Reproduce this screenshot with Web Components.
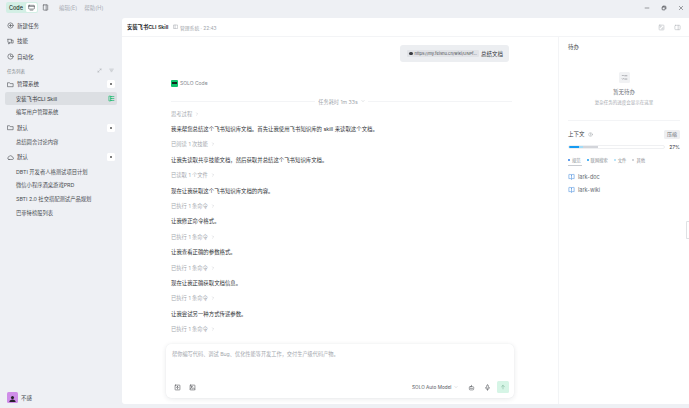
<!DOCTYPE html>
<html lang="zh"><head><meta charset="utf-8"><title>SOLO Code</title>
<style>
html,body{margin:0;padding:0;height:100%;overflow:hidden;background:#eef0f4}
body{font-family:Inter,"Noto Sans CJK SC",sans-serif;font-size:5.5px;color:#33363b}
</style></head><body>
<x-app>
  <x-topbar slot="top"></x-topbar>
  <x-sidebar slot="side">
    <x-nav icon="plus">新建任务</x-nav>
    <x-nav icon="skill">技能</x-nav>
    <x-nav icon="clock">自动化</x-nav>
    <x-listhead>任务列表</x-listhead>
    <x-group icon="folder" add>管理系统</x-group>
    <x-task selected>安装飞书CLI Skill</x-task>
    <x-task>编写用户管理系统</x-task>
    <x-group icon="folder" add>默认</x-group>
    <x-task>总结圆舍讨论内容</x-task>
    <x-group icon="cloud" add>默认</x-group>
    <x-task>DBTI 开发者人格测试项目计划</x-task>
    <x-task>微信小程序酒桌游戏PRD</x-task>
    <x-task>SBTI 2.0 社交搭配测试产品规划</x-task>
    <x-task>巴菲特榜股列表</x-task>
    <x-user slot="foot">不感</x-user>
  </x-sidebar>
  <x-panel slot="main">
    <x-header slot="head"></x-header>
    <x-chat slot="chat">
      <x-bubble></x-bubble>
      <x-agent></x-agent>
      <x-elapsed>任务耗时 1m 33s</x-elapsed>
      <x-step>思考过程</x-step>
      <x-say>我来帮您总结这个飞书知识库文档。首先让我使用飞书知识库的 skill 来读取这个文档。</x-say>
      <x-step>已阅读 1 次技能</x-step>
      <x-say>让我先读取共享技能文档，然后获取并总结这个飞书知识库文档。</x-say>
      <x-step>已读取 1 个文件</x-step>
      <x-say>现在让我获取这个飞书知识库文档的内容。</x-say>
      <x-step>已执行 1 条命令</x-step>
      <x-say>让我修正命令格式。</x-say>
      <x-step>已执行 1 条命令</x-step>
      <x-say>让我查看正确的参数格式。</x-say>
      <x-step>已执行 1 条命令</x-step>
      <x-say>现在让我正确获取文档信息。</x-say>
      <x-step>已执行 1 条命令</x-step>
      <x-say>让我尝试另一种方式传递参数。</x-say>
      <x-step>已执行 1 条命令</x-step>
    </x-chat>
    <x-composer slot="composer"></x-composer>
    <x-aside slot="aside"></x-aside>
  </x-panel>
</x-app>
<script>
const P={
 plus:'<circle cx="8" cy="8" r="6"/><path d="M8 5.5v5M5.5 8h5"/>',
 skill:'<path d="M2 3h8v8H5.5M10 5h4v6.5h-3M2 3v6M5.5 11l-1.5 3V9.5"/>',
 clock:'<circle cx="8" cy="8" r="6"/><path d="M8 4.5V8h3"/>',
 folder:'<path d="M2 4h4l1.5 2H14v7H2z"/>',
 cloud:'<path d="M4.5 12.5h7.5a2.6 2.6 0 0 0 .4-5.2A4.4 4.4 0 0 0 4 6.6a3 3 0 0 0 .5 5.9z"/>',
 expand:'<path d="M9.5 3H13v3.5M13 3L9 7M6.5 13H3V9.5M3 13l4-4"/>',
 filter:'<path d="M2 3.5h12M4.5 7.5h7M6.5 11.5h3"/>',
 tree:'<path d="M3 2.5h3v11H3zM8 3.5h5.5M8 8h5.5M8 12.5h5.5"/><path d="M6 3.5h2M6 8h2M6 12.5h2"/>',
 monitor:'<rect x="1.5" y="3" width="13" height="8.5" rx="1"/><path d="M1.5 5.5h13M5 14h6"/>',
 side:'<rect x="3" y="2" width="10" height="12" rx="1"/><path d="M9.5 2v12"/>',
 min:'<path d="M3 8h10"/>',
 restore:'<rect x="3" y="5" width="8" height="8" rx="2"/><path d="M6 3h5a2 2 0 0 1 2 2v5"/>',
 close:'<path d="M3.5 3.5l9 9M12.5 3.5l-9 9"/>',
 frame:'<rect x="2.5" y="2.5" width="11" height="11" rx="1.5"/><path d="M5 8V5h3M11 8v3H8"/>',
 panel:'<rect x="2" y="3" width="12" height="10" rx="1.5"/><path d="M9.5 3v10"/>',
 doc:'<rect x="2.5" y="3" width="11" height="10"/><path d="M6 3v10"/>',
 list:'<path d="M3 3.5l1 1 1.5-1.5M3 11l1 1 1.5-1.5M8.5 4h5M8.5 11.5h5"/>',
 info:'<circle cx="8" cy="8" r="6"/><path d="M8 7v4M8 4.5v1"/>',
 book:'<path d="M8 4.5C6.5 3 4 3 2 3.5V13c2-.5 4.5-.5 6 1 1.5-1.5 4-1.5 6-1V3.5C12 3 9.5 3 8 4.5zM8 4.5V14"/>',
 upload:'<rect x="2.5" y="2.5" width="11" height="11" rx="1"/><path d="M8 11V5.5M5.5 8 8 5.5 10.5 8"/>',
 image:'<rect x="2.5" y="2.5" width="11" height="11" rx="1"/><circle cx="6" cy="6.5" r="1.2"/><path d="M2.5 11.5l3.5-2.5 2.5 2 2-1.5 3 2.5"/>',
 chev:'<path d="M6 3.5 10.5 8 6 12.5"/>',
 down:'<path d="M3.5 6 8 10.5 12.5 6"/>',
 bot:'<rect x="3" y="6" width="10" height="7.5" rx="2"/><path d="M8 3v3M5.5 10h5"/>',
 mic:'<rect x="6" y="2" width="4" height="8" rx="2"/><path d="M3.5 8a4.5 4.5 0 0 0 9 0M8 12.5V14.5"/>',
 up:'<path d="M8 13V3.5M4 7.5l4-4 4 4"/>'
};
function def(name,css,html){
  customElements.define(name,class extends HTMLElement{
    connectedCallback(){
      if(this.shadowRoot)return;
      const r=this.attachShadow({mode:'open'});
      r.innerHTML='<style>'+css+'</style>'+(typeof html==='function'?html(this):html);
    }
  });
}
def('x-icon',':host{display:inline-flex;flex:none;width:var(--s,7px);height:var(--s,7px);color:var(--c,#44474d)}svg{width:100%;height:100%;fill:none;stroke:currentColor;stroke-width:var(--w,1.3);stroke-linecap:round;stroke-linejoin:round}',
  h=>'<svg viewBox="0 0 16 16">'+(P[h.getAttribute('name')]||'')+'</svg>');

def('x-app',`:host{display:grid;grid-template-columns:122px 1fr;grid-template-rows:18px 386px;width:689px;height:408px;overflow:hidden}
  .t{grid-column:1/3;display:flex}.s{display:flex}.m{display:flex;min-width:0}`,
  `<div class="t"><slot name="top"></slot></div><div class="s"><slot name="side"></slot></div><div class="m"><slot name="main"></slot></div>`);

def('x-topbar',`:host{display:flex;align-items:center;flex:1;height:18px;padding:0 5px 3px 6px;box-sizing:border-box;font-size:5.5px}
  .code{display:flex;align-items:center;background:#d3efe5;border-radius:2px;height:11px;padding:0 1px 0 3px;gap:3px;color:#24332e;font-weight:500}
  .on{background:#fff;border-radius:1.5px;width:11px;height:9px;display:flex;align-items:center;justify-content:center}
  .btn{margin:0 10px 0 4px;--c:#4a4d52}.menu{color:#a9adb4;margin-right:7px}.sp{flex:1}
  .w{margin-left:11px;--s:6px;--c:#3c3f44}.w:first-of-type{margin-left:0}`,
  `<div class="code"><span>Code</span><span class="on"><x-icon name="monitor"></x-icon></span></div>
   <x-icon class="btn" name="side"></x-icon><span class="menu">编辑(E)</span><span class="menu">帮助(H)</span><span class="sp"></span>
   <x-icon class="w" name="min"></x-icon><x-icon class="w" name="restore" style="--w:1.8"></x-icon><x-icon class="w" name="close"></x-icon>`);

def('x-sidebar',`:host{display:flex;flex-direction:column;width:122px;height:386px;box-sizing:border-box;padding:0 5px}
  .top{flex:1}.foot{height:13px;display:flex;align-items:center}`,
  `<div class="top"><slot></slot></div><div class="foot"><slot name="foot"></slot></div>`);

def('x-nav',`:host{display:flex;align-items:center;gap:3px;height:15.5px;padding-left:2px;color:#44474d}`,
  h=>`<x-icon name="${h.getAttribute('icon')}"></x-icon><span><slot></slot></span>`);
def('x-listhead',`:host{display:flex;align-items:center;height:10.25px;margin-top:1px;padding:0 2px;font-size:4.5px;color:#85898f}
  .sp{flex:1}x-icon{--s:5px;--c:#9da1a7;margin-right:7px}x-icon:last-child{margin-right:1px}`,
  `<span><slot></slot></span><span class="sp"></span><x-icon name="expand"></x-icon><x-icon name="filter"></x-icon>`);
def('x-group',`:host{display:flex;align-items:center;gap:3px;height:15px;margin-top:1px;padding:0 2px;color:#3e4147}
  .sp{flex:1}.add{width:8px;height:8px;background:#fff;border-radius:1.5px;display:flex;align-items:center;justify-content:center}
  .add i{width:2px;height:2px;border-radius:50%;background:#555}`,
  h=>`<x-icon name="${h.getAttribute('icon')}"></x-icon><span><slot></slot></span><span class="sp"></span><span class="add"><i></i></span>`);
def('x-task',`:host{display:flex;align-items:center;height:13.7px;padding:0 2px 0 11px;color:#4a4d52;border-radius:2px;font-size:5.3px}
  :host([selected]){background:#dcdfe3;color:#33363b}.sp{flex:1}x-icon{--s:7px;--c:#12b76a;--w:1.5}`,
  h=>`<span><slot></slot></span><span class="sp"></span>${h.hasAttribute('selected')?'<x-icon name="tree"></x-icon>':''}`);
def('x-user',`:host{display:flex;align-items:center;gap:3px;padding-left:2px;color:#44474d}
  .a{width:11px;height:11px;border-radius:1.5px;background:#cf8de8;display:flex;align-items:flex-end;justify-content:center;overflow:hidden}
  svg{width:9px;height:9px;fill:#26222b}`,
  `<span class="a"><svg viewBox="0 0 10 10"><circle cx="5" cy="4" r="1.7"/><path d="M1.5 9c0-2 1.5-3 3.5-3s3.5 1 3.5 3z"/></svg></span><span><slot></slot></span>`);

def('x-panel',`:host{display:grid;grid-template-columns:436px 131px;grid-template-rows:19px 1fr 60px;width:567px;height:386px;background:#fff;border-radius:3px 0 0 3px;overflow:hidden}
  .h{grid-column:1/3;display:flex}.c{display:flex;min-height:0;overflow:hidden}.k{display:flex;grid-column:1}.a{grid-column:2;grid-row:2/4;display:flex}`,
  `<div class="h"><slot name="head"></slot></div><div class="c"><slot name="chat"></slot></div><div class="a"><slot name="aside"></slot></div><div class="k"><slot name="composer"></slot></div>`);
def('x-header',`:host{display:flex;align-items:center;flex:1;border-bottom:1px solid #f3f4f6;padding:0 5px;box-sizing:border-box;gap:2px;color:#a0a4aa;font-size:4.8px}
  b{color:#25282c;font-weight:600;font-size:5.3px;margin-right:2px}.sp{flex:1}x-icon{--s:5.5px;--c:#9a9ea4}.r{--s:7px;--c:#b4b8bd;margin-right:7px}.r:last-child{margin-right:3px}`,
  `<b>安装飞书CLI Skill</b><x-icon name="doc"></x-icon><span>管理系统 · 22:43</span><span class="sp"></span><x-icon class="r" name="frame"></x-icon><x-icon class="r" name="panel"></x-icon>`);

def('x-chat',`:host{display:flex;flex-direction:column;width:341px;padding:8px 46px 0 49px;overflow:hidden}`,`<slot></slot>`);
def('x-bubble',`:host{display:flex;align-items:center;align-self:flex-end;height:17px;width:109px;box-sizing:border-box;margin-right:3px;background:#eceef1;border-radius:3px;padding:0 6px 0 7px;gap:2px;font-size:5.5px;color:#34373c}
  .chip{display:flex;align-items:center;gap:2px;width:72px;height:7px;box-sizing:border-box;padding-left:2px;background:#e1e3e7;border-radius:1px;font-size:4.1px;color:#4a4d52;white-space:nowrap;overflow:hidden}
  .dot{width:3.5px;height:3.5px;border-radius:50%;background:#3a3d42;flex:none}`,
  `<span class="chip"><i class="dot"></i>https://my.feishu.cn/wiki/UNPf...</span><span>总结文档</span>`);
def('x-agent',`:host{display:flex;align-items:center;gap:2px;height:8px;margin-top:17px;color:#84888e;font-size:5px}
  .l{width:7px;height:7px;border-radius:1px;background:#0ec26b;display:flex;align-items:center;justify-content:center}.l i{width:4.5px;height:2.5px;border:1px solid #10261c;display:block;box-sizing:border-box}`,
  `<span class="l"><i></i></span><span>SOLO Code</span>`);
def('x-elapsed',`:host{display:flex;align-items:center;gap:3px;height:8px;margin-top:10px;margin-bottom:1px;color:#a3a7ad;font-size:5.2px;white-space:nowrap}
  .ln{flex:1;height:1px;background:#f3f4f6}x-icon{--s:4px;--c:#a3a7ad}`,
  `<span class="ln"></span><span><slot></slot></span><x-icon name="down"></x-icon><span class="ln"></span>`);
def('x-step',`:host{display:flex;align-items:center;gap:3px;height:15.4px;color:#a4a8ae;font-size:5.3px;white-space:nowrap}x-icon{--s:4px;--c:#a4a8ae}`,
  `<span><slot></slot></span><x-icon name="chev"></x-icon>`);
def('x-say',`:host{display:flex;align-items:center;height:15.4px;color:#2e3135;font-size:5.4px;white-space:nowrap}`,`<slot></slot>`);

def('x-composer',`:host{display:flex;flex-direction:column;justify-content:space-between;width:348px;height:54px;margin-left:44px;box-sizing:border-box;padding:5.5px 5px 5px 6px;background:#fff;border-radius:5px;box-shadow:0 1px 5px rgba(30,40,60,.10),0 0 1px rgba(30,40,60,.08);color:#a4a8ae;font-size:5.2px}
  .b{display:flex;align-items:center;height:12px}.sp{flex:1}.i{--s:7px;--c:#4a4d52;margin-right:8px}.i:first-child{margin-left:2px}
  .m{color:#54575d;font-size:4.7px}.d{--s:4px;--c:#a4a8ae;margin:0 9.5px 0 2.5px}.r{--s:7px;--c:#55585e;margin-right:9px}.mic{margin-right:6.5px}
  .g{width:12px;height:12px;background:#d6f5e6;border-radius:1.5px;display:flex;align-items:center;justify-content:center;--s:6px;--c:#6fa98e}`,
  `<div>帮你编写代码、调试 Bug、优化性能等开发工作，交付生产级代码产物。</div>
   <div class="b"><x-icon class="i" name="upload"></x-icon><x-icon class="i" name="image"></x-icon><span class="sp"></span><span class="m">SOLO Auto Model</span><x-icon class="d" name="down"></x-icon><x-icon class="r" name="bot"></x-icon><x-icon class="r mic" name="mic"></x-icon><span class="g"><x-icon name="up"></x-icon></span></div>`);

def('x-aside',`:host{display:flex;flex-direction:column;width:131px;box-sizing:border-box;border-left:1px solid #f3f4f6;padding:0 9px;position:relative;font-size:5.5px;color:#3e4147}
  .t{height:8px;margin-top:6px;display:flex;align-items:center;color:#3c3f44}
  .empty{display:flex;flex-direction:column;align-items:center;margin-top:21px;height:48px;box-sizing:border-box;color:#6a6e74;gap:3px}
  .box{width:11px;height:11px;background:#f1f2f4;border-radius:1.5px;display:flex;align-items:center;justify-content:center;margin-bottom:2px;--s:7px;--c:#6a6e74}
  .sub{font-size:4.5px;color:#a4a8ae;margin-top:-0.5px}
  .hr{height:1px;background:#f3f4f6;margin:0 0 8px}
  .ctx{display:flex;align-items:center;gap:3px;height:10px}.ctx x-icon{--s:5px;--c:#9a9ea4}.sp{flex:1}
  .press{background:#eeeff1;border-radius:1.5px;padding:0 3px;height:9px;line-height:9px;font-size:5px;color:#6a6e74}
  .barrow{display:flex;align-items:center;gap:4px;margin-top:5px;height:6px}
  .bar{flex:1;height:4px;border:1px solid #eff0f2;box-sizing:border-box;border-radius:2px;display:flex;overflow:hidden;background:#fff}
  .bar i{display:block;height:100%}
  .pct{font-size:5px;color:#33363b}
  .leg{display:flex;gap:6px;margin-top:6px;font-size:4.3px;color:#8b8f95;height:8px;align-items:center;position:relative}
  .leg span{display:flex;align-items:center;gap:2px}.leg u{display:block;width:2px;height:2px;border-radius:50%}
  .under{position:absolute;left:0;bottom:-2px;width:14px;height:1.5px;background:#c9ccd1}
  .sk{display:flex;align-items:center;gap:3px;height:13px;color:#65696f;--s:7px;--c:#4a8fe0}
  .handle{position:absolute;right:0;top:184px;width:3px;height:18px;background:#fff;border:1px solid #dfe1e4;border-right:0;border-radius:1.5px 0 0 1.5px;box-sizing:border-box}`,
  `<div class="t">待办</div>
   <div class="empty"><span class="box"><x-icon name="list"></x-icon></span><span>暂无待办</span><span class="sub">复杂任务的进度会显示在这里</span></div>
   <div class="hr"></div>
   <div class="ctx"><span>上下文</span><x-icon name="info"></x-icon><span class="sp"></span><span class="press">压缩</span></div>
   <div class="barrow"><span class="bar"><i style="width:10%;background:#169bf2"></i><i style="width:5%;background:#a3dcf7"></i><i style="width:16%;background:#d3d5da"></i></span><span class="pct">27%</span></div>
   <div class="leg"><span><u style="background:#2f7fe8"></u>规范</span><span><u style="background:#169bf2"></u>联网搜索</span><span><u style="background:#a3dcf7"></u>文件</span><span><u style="background:#c4c7cc"></u>其他</span><i class="under"></i></div>
   <div style="height:6px"></div>
   <div class="sk"><x-icon name="book"></x-icon><span>lark-doc</span></div>
   <div class="sk"><x-icon name="book"></x-icon><span>lark-wiki</span></div>
   <i class="handle"></i>`);
</script>
</body></html>
